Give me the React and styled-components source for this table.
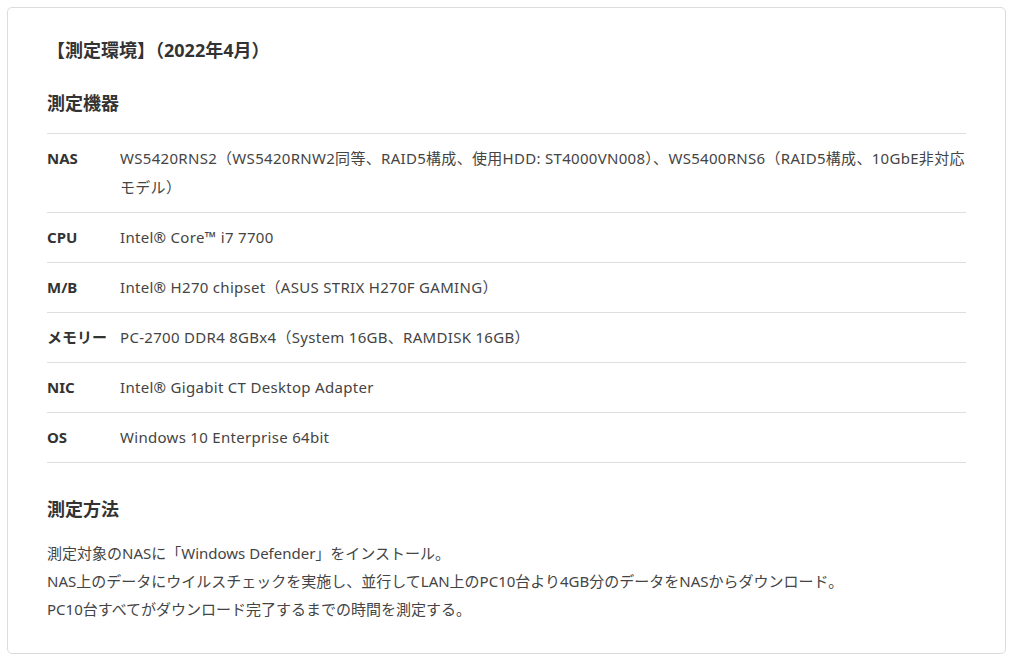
import styled, { createGlobalStyle } from "styled-components";

const GlobalStyle = createGlobalStyle`
  body {
    margin: 0;
    background: #fff;
    font-family: "Noto Sans", "Noto Sans CJK JP", sans-serif;
    color: #333;
  }
`;

const Card = styled.section`
  box-sizing: border-box;
  margin: 7px 0 0 7px;
  width: 999px;
  height: 647px;
  border: 1px solid #dcdcdc;
  border-radius: 5px;
  padding: 26px 39px 0;
`;

const Title = styled.h2`
  margin: 0;
  font-size: 18px;
  font-weight: 700;
  line-height: 32px;
  color: #333;
`;

const Heading = styled.h3`
  margin: ${(p) => p.$top}px 0 0;
  font-size: 18px;
  font-weight: 700;
  line-height: 32px;
  color: #333;
`;

const SpecTable = styled.div`
  margin-top: 14px;
  border-top: 1px solid #dedede;
`;

const Row = styled.div`
  display: grid;
  grid-template-columns: 73px 1fr;
  padding: 10px 0;
  border-bottom: 1px solid #dedede;
  font-size: 15px;
  line-height: 29px;
`;

const Label = styled.div`
  font-weight: 700;
  color: #333;
  white-space: nowrap;
`;

const Value = styled.div`
  color: #444;
  letter-spacing: 0.02em;
`;

const Body = styled.div`
  margin-top: 14px;
  font-size: 15px;
  line-height: 28px;
  color: #444;
  p {
    margin: 0;
  }
`;

const specs = [
  [
    "NAS",
    "WS5420RNS2（WS5420RNW2同等、RAID5構成、使用HDD: ST4000VN008）、WS5400RNS6（RAID5構成、10GbE非対応モデル）",
  ],
  ["CPU", "Intel® Core™ i7 7700"],
  ["M/B", "Intel® H270 chipset（ASUS STRIX H270F GAMING）"],
  ["メモリー", "PC-2700 DDR4 8GBx4（System 16GB、RAMDISK 16GB）"],
  ["NIC", "Intel® Gigabit CT Desktop Adapter"],
  ["OS", "Windows 10 Enterprise 64bit"],
];

const App = () => {
  return (
    <>
      <GlobalStyle />
      <Card>
        <Title>【測定環境】（2022年4月）</Title>
        <Heading $top={21}>測定機器</Heading>
        <SpecTable>
          {specs.map(([label, value]) => (
            <Row key={label}>
              <Label>{label}</Label>
              <Value>{value}</Value>
            </Row>
          ))}
        </SpecTable>
        <Heading $top={30}>測定方法</Heading>
        <Body>
          <p>測定対象のNASに「Windows Defender」をインストール。</p>
          <p>
            NAS上のデータにウイルスチェックを実施し、並行してLAN上のPC10台より4GB分のデータをNASからダウンロード。
          </p>
          <p>PC10台すべてがダウンロード完了するまでの時間を測定する。</p>
        </Body>
      </Card>
    </>
  );
};

export default App;
